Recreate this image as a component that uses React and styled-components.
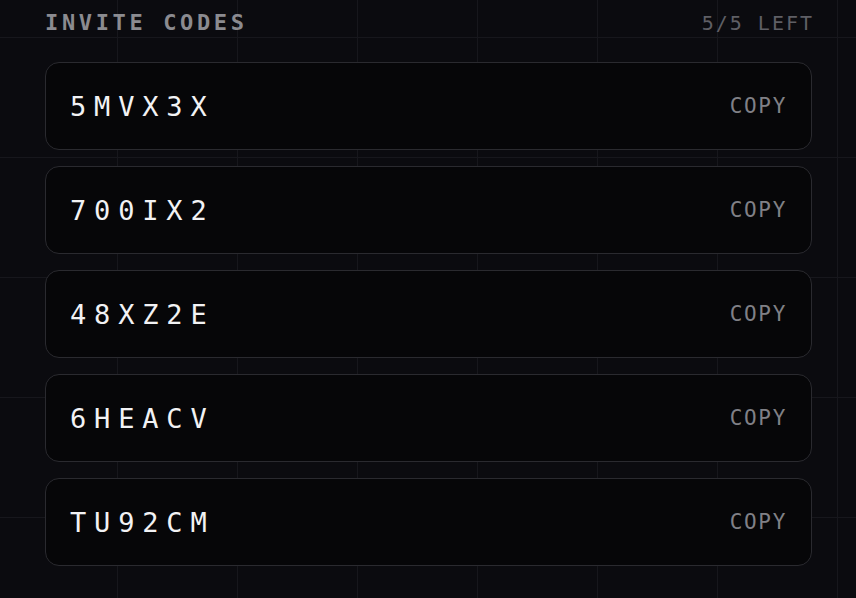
import styled, { createGlobalStyle } from "styled-components";

const GlobalStyle = createGlobalStyle`
  html, body {
    margin: 0;
    padding: 0;
    background-color: #0b0b0f;
  }
  body {
    min-height: 100vh;
    background-image:
      linear-gradient(to right, #17171c 1px, transparent 1px),
      linear-gradient(to bottom, #17171c 1px, transparent 1px);
    background-size: 120px 120px;
    background-position: -3px 37px;
    font-family: "DejaVu Sans Mono", "Liberation Mono", monospace;
  }
`;

const Page = styled.div`
  display: flex;
  flex-direction: column;
  padding: 10px 44px 0 45px;
`;

const Header = styled.div`
  display: flex;
  justify-content: space-between;
  align-items: center;
  margin-bottom: 26px;
`;

const Title = styled.span`
  font-size: 22px;
  line-height: 26px;
  font-weight: bold;
  letter-spacing: 0.165em;
  color: #8b8b90;
`;

const Counter = styled.span`
  font-size: 20px;
  line-height: 26px;
  letter-spacing: 0.1em;
  color: #5f5f65;
  margin-right: -2px;
`;

const CodeList = styled.div`
  display: flex;
  flex-direction: column;
  gap: 16px;
`;

const CodeCard = styled.div`
  display: flex;
  align-items: center;
  justify-content: space-between;
  box-sizing: border-box;
  height: 88px;
  padding: 0 24px;
  background: #060608;
  border: 1px solid #2a2a2f;
  border-radius: 14px;
`;

const Code = styled.span`
  font-size: 27px;
  letter-spacing: 0.29em;
  color: #f2f2f4;
`;

const CopyButton = styled.button`
  background: none;
  border: none;
  padding: 0;
  font-family: inherit;
  font-size: 21px;
  letter-spacing: 0.08em;
  color: #808086;
  cursor: pointer;
`;

const codes = ["5MVX3X", "700IX2", "48XZ2E", "6HEACV", "TU92CM"];

function App() {
  return (
    <>
      <GlobalStyle />
      <Page>
        <Header>
          <Title>INVITE CODES</Title>
          <Counter>5/5 LEFT</Counter>
        </Header>
        <CodeList>
          {codes.map((code) => (
            <CodeCard key={code}>
              <Code>{code}</Code>
              <CopyButton>COPY</CopyButton>
            </CodeCard>
          ))}
        </CodeList>
      </Page>
    </>
  );
}

export default App;
